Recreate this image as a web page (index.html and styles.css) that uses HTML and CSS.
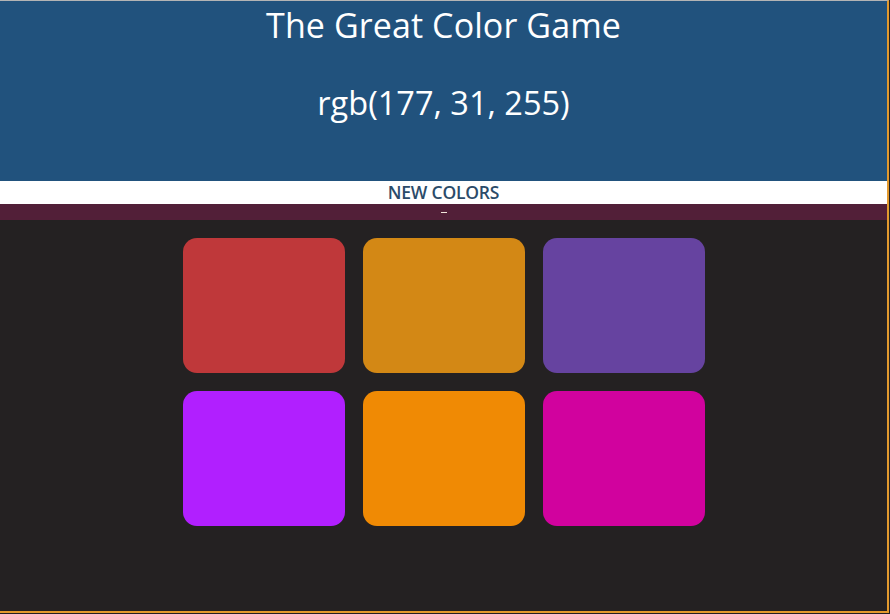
FILE: index.html
```html
<!DOCTYPE html>
<html>
<head>
<meta charset="utf-8">
<link rel="stylesheet" href="styles.css">
</head>
<body>
<div class="page">
  <header class="header">
    <h1 class="title">The Great Color Game</h1>
    <div class="rgb">rgb(177, 31, 255)</div>
  </header>
  <div class="stripe">
    <button class="reset">NEW COLORS</button>
  </div>
  <div class="message"><span class="dash"></span></div>
  <main class="board">
    <div class="grid">
      <div class="square" style="background:#bf383a"></div>
      <div class="square" style="background:#d38815"></div>
      <div class="square" style="background:#6643a0"></div>
      <div class="square" style="background:#b11fff"></div>
      <div class="square" style="background:#f08a04"></div>
      <div class="square" style="background:#d1029e"></div>
    </div>
  </main>
</div>
</body>
</html>
```

FILE: styles.css
```css
html, body {
  margin: 0;
  padding: 0;
  height: 100%;
  background: #242122;
  font-family: "Open Sans", "Noto Sans", sans-serif;
}
.page {
  width: 887px;
  height: 610px;
  border-right: 2px solid #e39a2e;
  border-bottom: 2px solid #e39a2e;
  border-top: 1px solid #b4b4b4;
  display: flex;
  flex-direction: column;
}
.header {
  background: #21527d;
  height: 180px;
  color: #fff;
  text-align: center;
  display: flex;
  flex-direction: column;
  align-items: center;
}
.title {
  margin: 0;
  font-weight: 400;
  font-size: 34px;
  line-height: 48px;
  letter-spacing: 0.1px;
}
.rgb {
  margin-top: 33px;
  font-size: 32.5px;
  line-height: 42px;
}
.stripe {
  background: #fff;
  height: 23px;
  display: flex;
  justify-content: center;
  align-items: center;
}
.reset {
  border: 0;
  background: none;
  padding: 0;
  font-family: inherit;
  font-size: 17.5px;
  font-weight: 600;
  color: #2b4b69;
  letter-spacing: -0.2px;
  line-height: 23px;
}
.message {
  background: #521f38;
  height: 16px;
  display: flex;
  justify-content: center;
  align-items: center;
}
.dash {
  width: 6px;
  height: 1px;
  background: #f2e6dc;
}
.board {
  flex: 1;
  display: flex;
  justify-content: center;
  padding-top: 18px;
}
.grid {
  display: grid;
  grid-template-columns: repeat(3, 162px);
  grid-auto-rows: 135px;
  gap: 18px;
  align-content: start;
}
.square {
  border-radius: 14px;
}
```
